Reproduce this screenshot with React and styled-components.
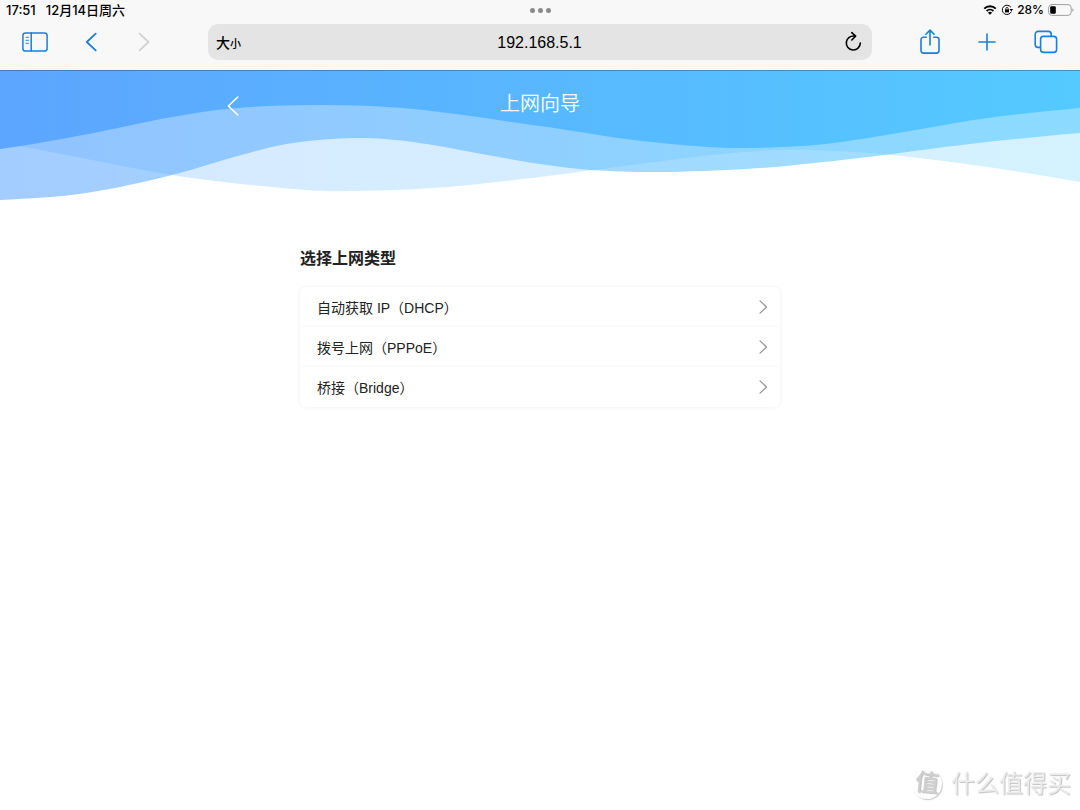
import React from "react";
import styled, { createGlobalStyle } from "styled-components";

const GlobalStyle = createGlobalStyle`
  * {
    box-sizing: border-box;
  }
  body {
    margin: 0;
    background-color: #fff;
    color: #222;
    font-family: "Liberation Sans", "Noto Sans CJK SC", sans-serif;
  }
  button {
    padding: 0;
    border: none;
    background: none;
    color: inherit;
    font: inherit;
    cursor: pointer;
  }
  svg {
    display: block;
  }
`;

const Page = styled.div`
  display: flex;
  flex-direction: column;
  min-height: 100vh;
`;

/* browser chrome */

const Chrome = styled.div`
  background-color: #f8f8f8;
  color: #000;
`;
const Split = styled.div`
  display: grid;
  grid-template-columns: 1fr auto 1fr;
  align-items: center;
`;
const StatusBar = styled(Split)`
  height: 20px;
  padding: 0 6px;
  font-family: Inter, "Noto Sans CJK SC", sans-serif;
  font-weight: 500;
  line-height: 20px;
`;
const StatusGroup = styled.div`
  display: flex;
  align-items: center;
  justify-content: ${({ end }) => (end ? "flex-end" : "flex-start")};
  gap: ${({ end }) => (end ? "4px" : "10px")};
  font-size: ${({ end }) => (end ? "12px" : "13px")};
`;
const Dots = styled.button`
  display: flex;
  gap: 3px;
`;
const Dot = styled.span`
  width: 5px;
  height: 5px;
  border-radius: 50%;
  background-color: #8a8a8a;
`;
const Toolbar = styled.div`
  display: grid;
  grid-template-columns: 208px 1fr 208px;
  padding: 4px 0 10px;
`;
const Tools = styled.div`
  display: flex;
  align-items: center;
  justify-content: space-between;
  padding: ${({ end }) => (end ? "0 22px 0 48px" : "0 58px 0 22px")};
  color: #1a7fdc;
`;
const Address = styled(Split)`
  height: 36px;
  padding: 0 9px 0 8px;
  border-radius: 10px;
  background-color: #e4e4e5;
`;
const TextSize = styled.button`
  justify-self: start;
  font-size: 14px;
  font-weight: 500;
`;
const Smaller = styled.span`
  font-size: 11px;
`;
const Url = styled.span`
  padding-top: 2px;
  font-size: 16px;
`;
const Reload = styled.button`
  justify-self: end;
`;

/* wizard page */

const Header = styled.header`
  display: grid;
  grid-template-columns: 1fr;
  grid-template-rows: 132px;

  > * {
    grid-area: 1 / 1;
  }
`;
const WaveArt = styled.svg`
  width: 100%;
  height: 132px;
`;
const TitleRow = styled(Split)`
  align-self: start;
  justify-self: center;
  width: 60%;
  padding: 18px 9px;
  color: #fff;
`;
const BackButton = styled.button`
  padding-top: 3px;
`;
const Title = styled.h1`
  margin: 0;
  font-size: 20px;
  font-weight: 350;
  line-height: 32px;
`;
const Main = styled.main`
  width: 480px;
  max-width: 100%;
  margin: 0 auto;
  padding-top: 45px;
`;
const Heading = styled.h2`
  margin: 0 0 16px;
  font-size: 16px;
  font-weight: 700;
  line-height: 24px;
`;
const List = styled.ul`
  margin: 0;
  padding: 0;
  list-style: none;
  border-radius: 6px;
  box-shadow: 0 0 4px rgba(0, 0, 0, 0.07);
`;
const Item = styled.li`
  height: 40px;

  &:not(:last-child) {
    border-bottom: 1px solid #f9f9f9;
  }
`;
const ItemButton = styled.button`
  display: flex;
  align-items: center;
  justify-content: space-between;
  width: 100%;
  height: 39px;
  padding: 0 12px 0 17px;
  font-size: 14px;
`;

const Watermark = styled.div`
  position: fixed;
  right: 9px;
  bottom: 10px;
  display: flex;
  align-items: center;
  gap: 9px;
  color: #ececec;
  font-size: 24px;
  line-height: 32px;
  text-shadow: 1px 1px 1px #c0c0c0;
`;
const Seal = styled.span`
  width: 30px;
  height: 30px;
  border-radius: 50%;
  box-shadow: 1px 1px 1px #ccc;
  color: #d0d0d0;
  font-weight: 500;
  line-height: 28px;
  text-align: center;
  transform: rotate(6deg);
`;

const Icon = ({ w, h, stroke = 2, children }) => (
  <svg
    width={w}
    height={h}
    viewBox={`0 0 ${w} ${h}`}
    fill="none"
    stroke="currentColor"
    strokeWidth={stroke}
    strokeLinecap="round"
    strokeLinejoin="round"
    aria-hidden="true"
  >
    {children}
  </svg>
);

const SidebarIcon = () => (
  <Icon w={26} h={20} stroke={1.5}>
    <rect x="0.9" y="0.9" width="24.2" height="18.2" rx="2.6" />
    <path d="M9.2 1v18" />
    <path d="M4 5.2h2.4M4 8.2h2.4M4 11.2h2.4" strokeWidth="1.1" />
  </Icon>
);
const BackIcon = () => (
  <Icon w={14} h={20} stroke={1.8}>
    <path d="M10.7 1.6 1.8 10l8.9 8.4" />
  </Icon>
);
const ForwardIcon = () => (
  <Icon w={14} h={20} stroke={1.8}>
    <path d="M3.6 1.6 12.5 10l-8.9 8.4" stroke="#d2d2d3" />
  </Icon>
);
const ReloadIcon = () => (
  <Icon w={20} h={22} stroke={1.6}>
    <path d="M11.6 5.1A7 7 0 1 0 17.3 12" />
    <path d="m8.8 1.6 3.8 3.6-3.8 3.8" />
  </Icon>
);
const ShareIcon = () => (
  <Icon w={20} h={26} stroke={1.6}>
    <path d="M6.2 8.3H3.4A2.4 2.4 0 0 0 1 10.7v11a2.4 2.4 0 0 0 2.4 2.4h13.2a2.4 2.4 0 0 0 2.4-2.4v-11a2.4 2.4 0 0 0-2.4-2.4h-2.8" />
    <path d="M10 16V1.4M5.9 5.2 10 1.1l4.1 4.1" />
  </Icon>
);
const PlusIcon = () => (
  <Icon w={18} h={18} stroke={1.6}>
    <path d="M9 1v16M1 9h16" />
  </Icon>
);
const TabsIcon = () => (
  <Icon w={24} h={24} stroke={1.6}>
    <rect x="6.6" y="6.4" width="16" height="16" rx="2.8" />
    <path d="M6.4 17.4H4a2.8 2.8 0 0 1-2.8-2.8V4.2A2.8 2.8 0 0 1 4 1.4h10.4a2.8 2.8 0 0 1 2.8 2.8v2" />
  </Icon>
);
const WifiIcon = () => (
  <Icon w={14} h={10} stroke={1.9}>
    <path d="M1.2 3.6a8.3 8.3 0 0 1 11.6 0M3.6 6a4.9 4.9 0 0 1 6.8 0" strokeLinecap="butt" />
    <path d="M7 9.8 4.9 7.7a3 3 0 0 1 4.2 0z" fill="currentColor" stroke="none" />
  </Icon>
);
const LockIcon = () => (
  <Icon w={12} h={12} stroke={1}>
    <path d="M9.6 2.8A4.7 4.7 0 1 0 10.2 8" />
    <path d="m8.4 5 2.2 2.2L12 5z" fill="currentColor" stroke="none" />
    <rect x="4" y="5.4" width="4" height="3" fill="currentColor" stroke="none" />
    <path d="M4.9 5.4V4.5a1.1 1.1 0 0 1 2.2 0v.9" strokeWidth="0.8" />
  </Icon>
);
const BatteryIcon = () => (
  <Icon w={26} h={12} stroke={1}>
    <rect x="0.6" y="0.6" width="22.6" height="10.8" rx="3.2" stroke="#a0a0a0" />
    <rect x="2.2" y="2.2" width="5.6" height="7.6" rx="1.4" fill="#000" stroke="none" />
    <path d="M24.4 4.2c1.6.6 1.6 3 0 3.6z" fill="#a0a0a0" stroke="none" />
  </Icon>
);
const Chevron = () => (
  <Icon w={9} h={14} stroke={1.1}>
    <path d="m1 .8 6.6 6.2L1 13.2" stroke="#8c8c8c" />
  </Icon>
);

const waves = [
  {
    opacity: 0.25,
    points: [[-60, 66], [24, 77], [172, 105], [293, 119], [355, 121], [448, 117], [540, 107], [609, 98], [712, 85], [781, 80], [833, 81], [891, 85], [988, 97], [1080, 112], [1170, 128]],
  },
  {
    opacity: 0.56,
    points: [[-90, 132], [0, 130], [86, 123], [172, 105], [241, 85], [293, 73], [355, 68], [413, 72], [482, 84], [540, 94], [592, 100], [660, 102], [747, 99], [815, 93], [884, 85], [970, 74], [1080, 63], [1180, 56]],
  },
  {
    opacity: 1,
    points: [[-90, 88], [0, 79], [83, 65], [172, 47], [238, 38], [320, 35], [413, 39], [540, 56], [626, 69], [695, 76], [747, 78], [815, 75], [874, 67], [933, 57], [988, 48], [1080, 38], [1170, 32]],
  },
];

// smooth line through the points, closed along the top edge
const wavePath = (points) => {
  const at = (i) => points[Math.max(0, Math.min(points.length - 1, i))];
  const curves = points.slice(1).map((end, i) => {
    const [before, start, after] = [at(i - 1), at(i), at(i + 2)];
    const c1 = start.map((v, k) => v + (end[k] - before[k]) / 6);
    const c2 = end.map((v, k) => v - (after[k] - start[k]) / 6);
    return `C${c1} ${c2} ${end}`;
  });
  return `M${points[0][0]} 0L${points[0]}${curves.join("")}V0Z`;
};

const Waves = () => (
  <WaveArt viewBox="0 0 1080 132" preserveAspectRatio="none" aria-hidden="true">
    <defs>
      <linearGradient id="sky" gradientUnits="userSpaceOnUse" x1="0" y1="0" x2="1080" y2="0">
        <stop offset="0" stopColor="#5ca5ff" />
        <stop offset="1" stopColor="#54caff" />
      </linearGradient>
    </defs>
    {waves.map(({ opacity, points }) => (
      <path key={opacity} d={wavePath(points)} fill="url(#sky)" opacity={opacity} />
    ))}
    <rect width="1080" height="1" fill="#000" opacity="0.25" />
  </WaveArt>
);

const types = ["自动获取 IP（DHCP）", "拨号上网（PPPoE）", "桥接（Bridge）"];

const BrowserChrome = () => (
  <Chrome>
    <StatusBar>
      <StatusGroup>
        <span>17:51</span>
        <span>12月14日周六</span>
      </StatusGroup>
      <Dots aria-label="多任务">
        <Dot />
        <Dot />
        <Dot />
      </Dots>
      <StatusGroup end>
        <WifiIcon />
        <LockIcon />
        <span>28%</span>
        <BatteryIcon />
      </StatusGroup>
    </StatusBar>
    <Toolbar>
      <Tools>
        <button aria-label="边栏"><SidebarIcon /></button>
        <button aria-label="后退"><BackIcon /></button>
        <button aria-label="前进"><ForwardIcon /></button>
      </Tools>
      <Address>
        <TextSize>
          大<Smaller>小</Smaller>
        </TextSize>
        <Url>192.168.5.1</Url>
        <Reload aria-label="刷新"><ReloadIcon /></Reload>
      </Address>
      <Tools end>
        <button aria-label="共享"><ShareIcon /></button>
        <button aria-label="新标签页"><PlusIcon /></button>
        <button aria-label="标签页"><TabsIcon /></button>
      </Tools>
    </Toolbar>
  </Chrome>
);

const App = () => (
  <Page>
    <GlobalStyle />
    <BrowserChrome />
    <Header>
      <Waves />
      <TitleRow>
        <BackButton aria-label="返回">
          <Icon w={14} h={22} stroke={1.6}>
            <path d="M12.8 2 3.4 11l9.4 9" />
          </Icon>
        </BackButton>
        <Title>上网向导</Title>
      </TitleRow>
    </Header>
    <Main>
      <Heading>选择上网类型</Heading>
      <List>
        {types.map((type) => (
          <Item key={type}>
            <ItemButton>
              {type}
              <Chevron />
            </ItemButton>
          </Item>
        ))}
      </List>
    </Main>
    <Watermark>
      <Seal>值</Seal>
      <span>什么值得买</span>
    </Watermark>
  </Page>
);

export default App;
